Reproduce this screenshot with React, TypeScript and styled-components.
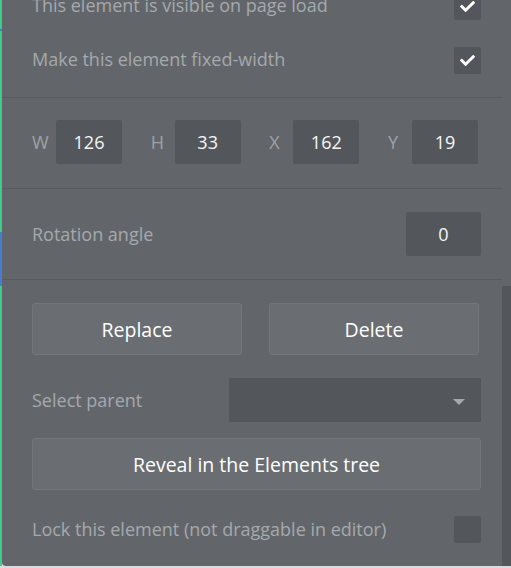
import styled, { createGlobalStyle } from 'styled-components'
import { FaCheck } from 'react-icons/fa'

const GlobalStyle = createGlobalStyle`
  html, body {
    margin: 0;
    padding: 0;
    background: #dcdcdc;
  }
  body {
    font-family: 'Open Sans', 'Liberation Sans', sans-serif;
  }
`

const Page = styled.div`
  display: flex;
  width: 511px;
  height: 568px;
  overflow: hidden;
  background: #dcdcdc;
`

const Canvas = styled.div`
  width: 2px;
  height: 566px;
  background: linear-gradient(
    to bottom,
    #3dcc8e 0px,
    #3dcc8e 29px,
    #4a7bd0 29px,
    #4a7bd0 31px,
    #3dcc8e 31px,
    #3dcc8e 232px,
    #4a7bd0 232px,
    #4a7bd0 286px,
    #3dcc8e 286px
  );
`

const Panel = styled.div`
  flex: 1;
  display: flex;
  height: 566px;
  background: #62666a;
  border-bottom-left-radius: 4px;
  overflow: hidden;
`

const Content = styled.div`
  flex: 1;
  margin-top: -30px;
`

const Gutter = styled.div`
  width: 9px;
  display: flex;
  flex-direction: column;
  padding-top: 286px;
`

const Thumb = styled.div`
  flex: 1;
  background: #53575b;
`

const Section = styled.div<{ $top?: number; $bottom?: number }>`
  display: flex;
  flex-direction: column;
  padding: ${(p) => p.$top ?? 23}px 21px ${(p) => p.$bottom ?? 23}px 30px;
  border-bottom: 1px solid #585c60;

  &:last-child {
    border-bottom: 0;
  }
`

const Row = styled.div<{ $gap?: number }>`
  display: flex;
  align-items: center;
  justify-content: space-between;
  margin-top: ${(p) => p.$gap ?? 0}px;
`

const Label = styled.span<{ $lift?: number }>`
  color: #a5a9ad;
  font-size: 18px;
  line-height: 27px;
  margin-top: ${(p) => -(p.$lift ?? 0)}px;
`

const Check = styled.div`
  width: 27px;
  height: 27px;
  border-radius: 2px;
  background: #53575b;
  display: flex;
  align-items: center;
  justify-content: center;
  color: #ffffff;
  font-size: 15px;
`

const Dims = styled.div`
  display: flex;
  justify-content: space-between;
  padding-right: 3px;
`

const Dim = styled.div`
  display: flex;
  align-items: center;
`

const DimLabel = styled.span`
  width: 24px;
  color: #9ea2a6;
  font-size: 18px;
`

const Field = styled.div<{ $w: number }>`
  width: ${(p) => p.$w}px;
  height: 44px;
  border-radius: 2px;
  background: #53575b;
  color: #f6f6f6;
  font-size: 18px;
  display: flex;
  align-items: center;
  justify-content: center;
`

const Buttons = styled.div`
  display: grid;
  grid-template-columns: 1fr 1fr;
  gap: 27px;
  padding-right: 2px;
`

const Button = styled.button<{ $gap?: number }>`
  height: 52px;
  margin-top: ${(p) => p.$gap ?? 0}px;
  border: 1px solid #73777b;
  border-radius: 3px;
  background: #6a6e72;
  color: #ffffff;
  font-family: inherit;
  font-size: 19.5px;
  cursor: pointer;
`

const Select = styled.div`
  width: 252px;
  height: 44px;
  background: #53575b;
  display: flex;
  align-items: center;
  justify-content: flex-end;
  padding-right: 16px;
  box-sizing: border-box;
`

const Caret = styled.span`
  width: 0;
  height: 0;
  border-left: 6px solid transparent;
  border-right: 6px solid transparent;
  border-top: 6px solid #a5a9ad;
  margin-top: 4px;
`

export default function App() {
  return (
    <>
      <GlobalStyle />
      <Page>
        <Canvas />
        <Panel>
          <Content>
            <Section>
              <Row>
                <Label $lift={2}>This element is visible on page load</Label>
                <Check>
                  <FaCheck />
                </Check>
              </Row>
              <Row $gap={27}>
                <Label $lift={2}>Make this element fixed-width</Label>
                <Check>
                  <FaCheck />
                </Check>
              </Row>
            </Section>
            <Section $top={22} $bottom={24}>
              <Dims>
                {[
                  ['W', '126'],
                  ['H', '33'],
                  ['X', '162'],
                  ['Y', '19'],
                ].map(([k, v]) => (
                  <Dim key={k}>
                    <DimLabel>{k}</DimLabel>
                    <Field $w={66}>{v}</Field>
                  </Dim>
                ))}
              </Dims>
            </Section>
            <Section>
              <Row>
                <Label>Rotation angle</Label>
                <Field $w={75}>0</Field>
              </Row>
            </Section>
            <Section $bottom={24}>
              <Buttons>
                <Button>Replace</Button>
                <Button>Delete</Button>
              </Buttons>
              <Row $gap={23}>
                <Label>Select parent</Label>
                <Select>
                  <Caret />
                </Select>
              </Row>
              <Button $gap={16}>Reveal in the Elements tree</Button>
              <Row $gap={26}>
                <Label $lift={1}>Lock this element (not draggable in editor)</Label>
                <Check />
              </Row>
            </Section>
          </Content>
          <Gutter>
            <Thumb />
          </Gutter>
        </Panel>
      </Page>
    </>
  )
}
